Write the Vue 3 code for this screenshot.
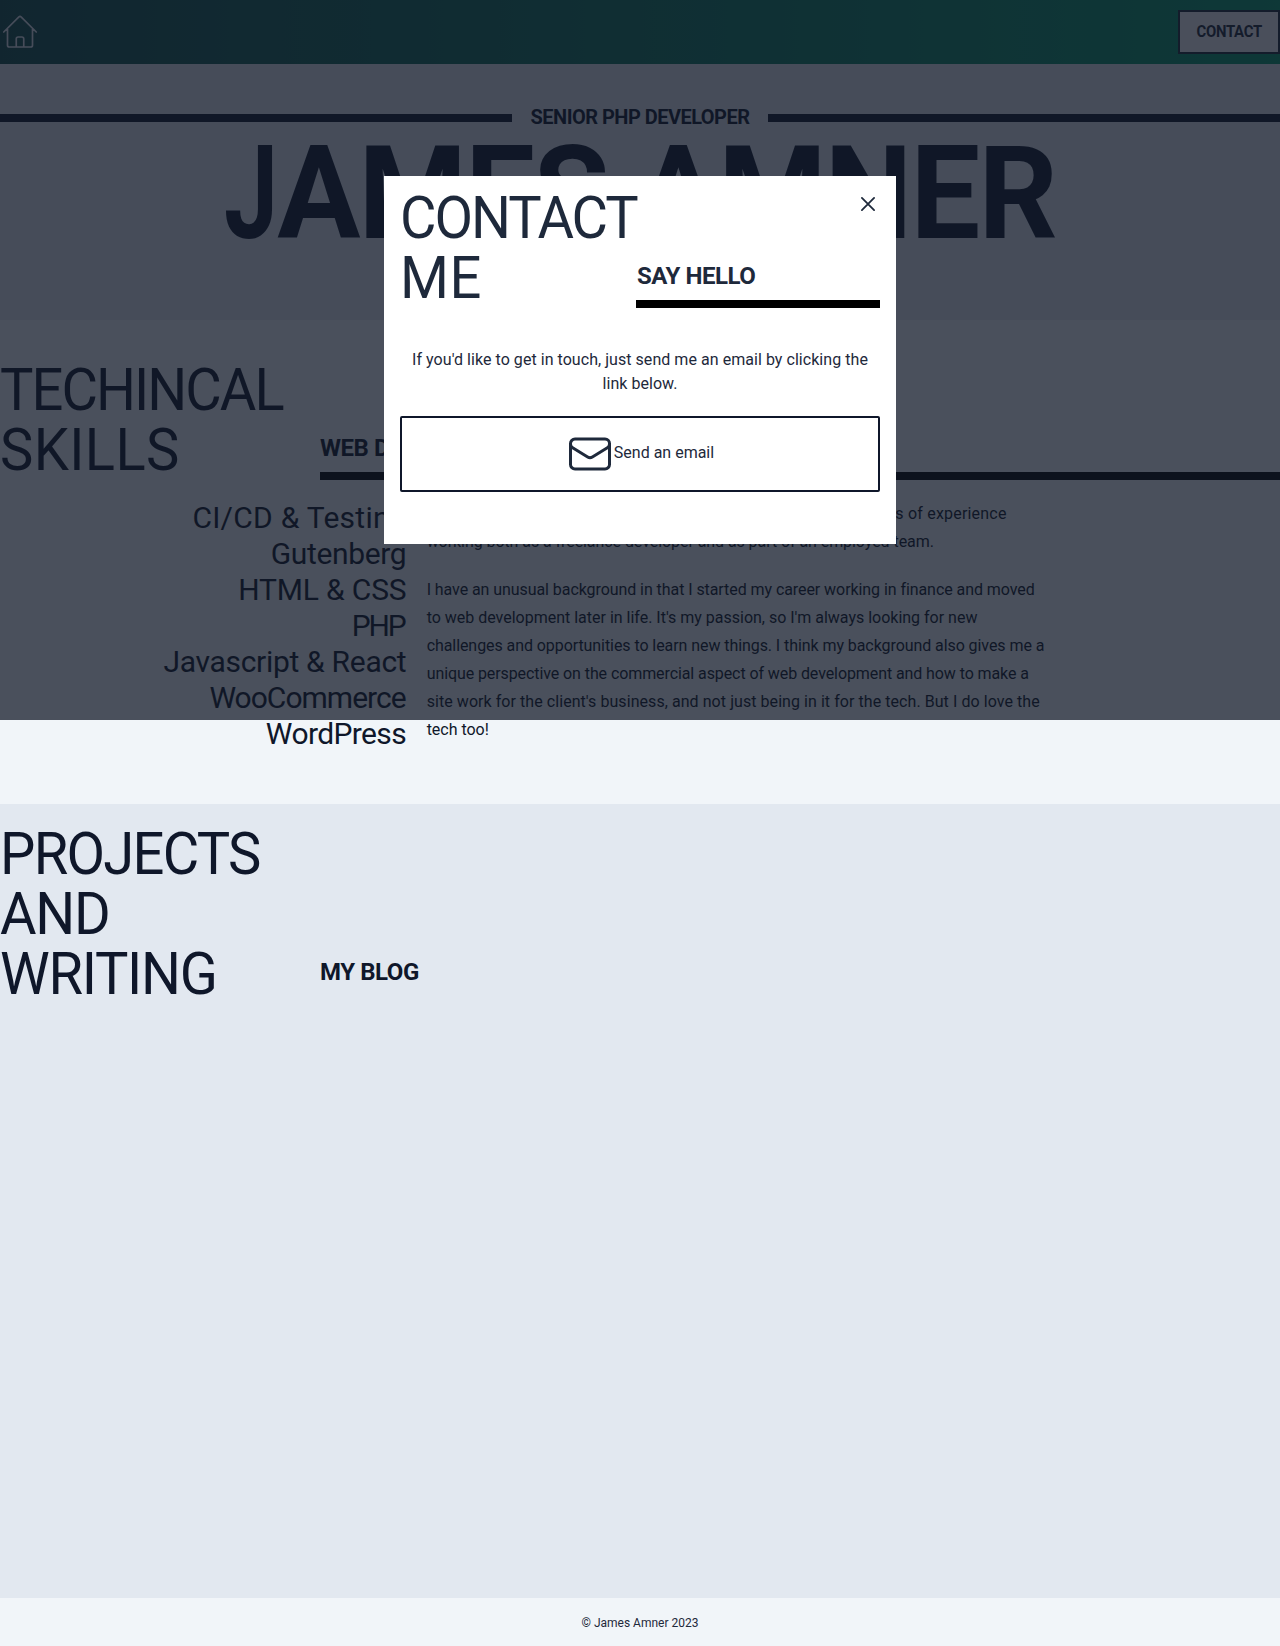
<script setup>
const skillsTitle = [
  { text: 'TECHINCAL', ls: -2.05 },
  { text: 'SKILLS', ls: 0.4 },
]
const projectsTitle = [
  { text: 'PROJECTS', ls: -1.8 },
  { text: 'AND', ls: -1.4 },
  { text: 'WRITING', ls: -1.34 },
]
const contactTitle = [
  { text: 'CONTACT', ls: -2.14 },
  { text: 'ME', ls: 0.5 },
]
const skills = [
  { text: 'CI/CD & Testing', ls: 0.26 },
  { text: 'Gutenberg', ls: -0.36 },
  { text: 'HTML & CSS', ls: -0.16 },
  { text: 'PHP', ls: -2.2 },
  { text: 'Javascript & React', ls: -0.3 },
  { text: 'WooCommerce', ls: -0.98 },
  { text: 'WordPress', ls: -0.62 },
]
const paragraphs = [
  [
    { text: "I'm a full stack web developer specialising in WordPress, with lots of experience", ls: 0.2 },
    { text: 'working both as a freelance developer and as part of an employed team.', ls: -0.068 },
  ],
  [
    { text: 'I have an unusual background in that I started my career working in finance and moved', ls: -0.07 },
    { text: "to web development later in life. It's my passion, so I'm always looking for new", ls: -0.008 },
    { text: 'challenges and opportunities to learn new things. I think my background also gives me a', ls: -0.073 },
    { text: 'unique perspective on the commercial aspect of web development and how to make a', ls: -0.09 },
    { text: "site work for the client's business, and not just being in it for the tech. But I do love the", ls: 0.06 },
    { text: 'tech too!', ls: -0.025 },
  ],
]
const track = (line) => ({ letterSpacing: line.ls + 'px' })
</script>

<template>
  <div class="page">
    <header class="bar">
      <svg class="home" viewBox="0 0 24 24" fill="none" stroke="currentColor" stroke-width="1" stroke-linecap="round" stroke-linejoin="round">
        <path d="M2.25 12l8.954-8.955c.44-.439 1.152-.439 1.591 0L21.75 12M4.5 9.75v10.125c0 .621.504 1.125 1.125 1.125H9.75v-4.875c0-.621.504-1.125 1.125-1.125h2.25c.621 0 1.125.504 1.125 1.125V21h4.125c.621 0 1.125-.504 1.125-1.125V9.75M8.25 21h8.25" />
      </svg>
      <button class="contact-btn"><span>CONTACT</span></button>
    </header>

    <section class="hero">
      <div class="role">
        <span class="rule"></span>
        <h2>SENIOR PHP DEVELOPER</h2>
        <span class="rule"></span>
      </div>
      <h1><span class="initial">J</span>AMES AMNER</h1>
    </section>

    <section class="skills">
      <div class="heading">
        <h2 class="title"><span v-for="l in skillsTitle" :key="l.text" :style="track(l)">{{ l.text }}</span></h2>
        <h3 class="sub ruled">WEB DEVELOPMENT</h3>
      </div>
      <div class="columns">
        <ul>
          <li v-for="s in skills" :key="s.text" :style="{ letterSpacing: s.ls + 'px', marginRight: -s.ls + 'px' }">{{ s.text }}</li>
        </ul>
        <div class="copy">
          <p v-for="(p, i) in paragraphs" :key="i"><span v-for="l in p" :key="l.text" :style="track(l)">{{ l.text }}</span></p>
        </div>
      </div>
    </section>

    <section class="projects">
      <div class="heading">
        <h2 class="title"><span v-for="l in projectsTitle" :key="l.text" :style="track(l)">{{ l.text }}</span></h2>
        <h3 class="sub">MY BLOG</h3>
      </div>
    </section>

    <footer>© James Amner 2023</footer>

    <div class="overlay">
      <div class="modal">
        <div class="heading">
          <h2 class="title"><span v-for="l in contactTitle" :key="l.text" :style="track(l)">{{ l.text }}</span></h2>
          <h3 class="sub ruled">SAY HELLO</h3>
        </div>
        <p class="intro">If you'd like to get in touch, just send me an email by clicking the<br />link below.</p>
        <a class="email">
          <svg viewBox="0 0 24 24" fill="none" stroke="currentColor" stroke-width="1.5" stroke-linecap="round" stroke-linejoin="round">
            <path d="M21.75 6.75v10.5a2.25 2.25 0 01-2.25 2.25h-15a2.25 2.25 0 01-2.25-2.25V6.75m19.5 0A2.25 2.25 0 0019.5 4.5h-15a2.25 2.25 0 00-2.25 2.25m19.5 0v.243a2.25 2.25 0 01-1.07 1.916l-7.5 4.615a2.25 2.25 0 01-2.36 0L3.32 8.91a2.25 2.25 0 01-1.07-1.916V6.75" />
          </svg>
          <span>Send an email</span>
        </a>
        <svg class="close" viewBox="0 0 24 24" fill="none" stroke="currentColor" stroke-width="1.8" stroke-linecap="round">
          <path d="M5.9 18.1L18.1 5.9M5.9 5.9l12.2 12.2" />
        </svg>
      </div>
    </div>
  </div>
</template>

<style>
body {
  margin: 0;
}
</style>

<style scoped>
.page {
  position: relative;
  height: 1646px;
  display: flex;
  flex-direction: column;
  background: #f1f5f9;
  color: #0f172a;
  font-family: Roboto, "Liberation Sans", sans-serif;
  font-size: 16px;
  overflow: hidden;
}
h1, h2, h3, p, ul {
  margin: 0;
  padding: 0;
}
.bar {
  box-sizing: border-box;
  height: 64px;
  display: flex;
  align-items: center;
  justify-content: space-between;
  background: linear-gradient(to right, #134e4a, #059669);
}
.home {
  width: 40px;
  height: 40px;
  color: #e2e8f0;
}
.contact-btn {
  box-sizing: border-box;
  width: 102px;
  height: 44px;
  padding: 0;
  border: 2px solid #1e293b;
  background: #f3f4f6;
  color: #1e293b;
  font: 700 16px/24px Roboto, "Liberation Sans", sans-serif;
  letter-spacing: -0.3px;
}
.contact-btn span {
  display: inline-block;
  transform: scaleX(0.93);
}
.hero {
  box-sizing: border-box;
  height: 256px;
  padding-top: 36px;
  background: #e2e8f0;
  text-align: center;
}
.role {
  display: grid;
  grid-template-columns: 2fr 1fr 2fr;
  align-items: center;
  height: 36px;
}
.role h2 {
  padding-bottom: 2px;
  font-size: 20px;
  line-height: 28px;
  letter-spacing: -0.53px;
  white-space: nowrap;
}
.rule {
  height: 8px;
  background: #0f172a;
}
.hero h1 {
  font-size: 130.4px;
  line-height: 116px;
  letter-spacing: -1.85px;
  white-space: nowrap;
  transform: scaleX(0.95);
}
.initial {
  display: inline-block;
  margin-right: -15px;
  transform: scaleX(0.78);
  transform-origin: left;
}
.heading {
  display: grid;
  grid-template-columns: 320px 1fr;
  align-items: end;
}
.title {
  font-size: 59px;
  line-height: 60px;
  font-weight: 400;
}
.title span {
  display: block;
  transform: scaleX(0.95);
  transform-origin: left;
  white-space: nowrap;
}
.sub {
  padding-bottom: 16px;
  font-size: 24px;
  line-height: 32px;
  letter-spacing: -0.45px;
}
.ruled {
  padding-bottom: 8px;
  border-bottom: 8px solid #000;
}
.skills {
  box-sizing: border-box;
  height: 484px;
  padding-top: 40px;
}
.columns {
  display: grid;
  grid-template-columns: 1fr 2fr;
  padding-top: 20px;
}
.columns ul {
  padding-right: 20px;
  list-style: none;
  text-align: right;
  font-size: 30px;
  line-height: 36px;
}
.copy {
  line-height: 28px;
}
.copy p + p {
  margin-top: 20px;
}
.copy span {
  display: block;
  white-space: nowrap;
}
.projects {
  box-sizing: border-box;
  height: 794px;
  padding-top: 20px;
  background: #e2e8f0;
}
footer {
  padding-top: 17px;
  text-align: center;
  font-size: 12px;
  line-height: 16px;
  color: #1e293b;
}
.overlay {
  box-sizing: border-box;
  position: absolute;
  inset: 0 0 auto;
  height: 720px;
  display: flex;
  align-items: center;
  justify-content: center;
  background: rgba(17, 24, 39, 0.75);
}
.modal {
  box-sizing: border-box;
  position: relative;
  width: 512px;
  height: 368px;
  padding: 12px 16px;
  background: #fff;
  color: #1e293b;
}
.modal .heading {
  grid-template-columns: 236px 1fr;
}
.modal .sub {
  text-indent: 1px;
}
.intro {
  margin-top: 40px;
  text-align: center;
  line-height: 24px;
  letter-spacing: 0.048px;
  white-space: nowrap;
}
.email {
  display: flex;
  align-items: center;
  justify-content: center;
  margin-top: 20px;
  padding: 12px 0;
  border: 2px solid #0f172a;
  border-radius: 2px;
}
.email svg {
  width: 48px;
  height: 48px;
}
.email span {
  padding-bottom: 2px;
  line-height: 24px;
}
.close {
  position: absolute;
  top: 16px;
  right: 16px;
  width: 24px;
  height: 24px;
}
</style>
